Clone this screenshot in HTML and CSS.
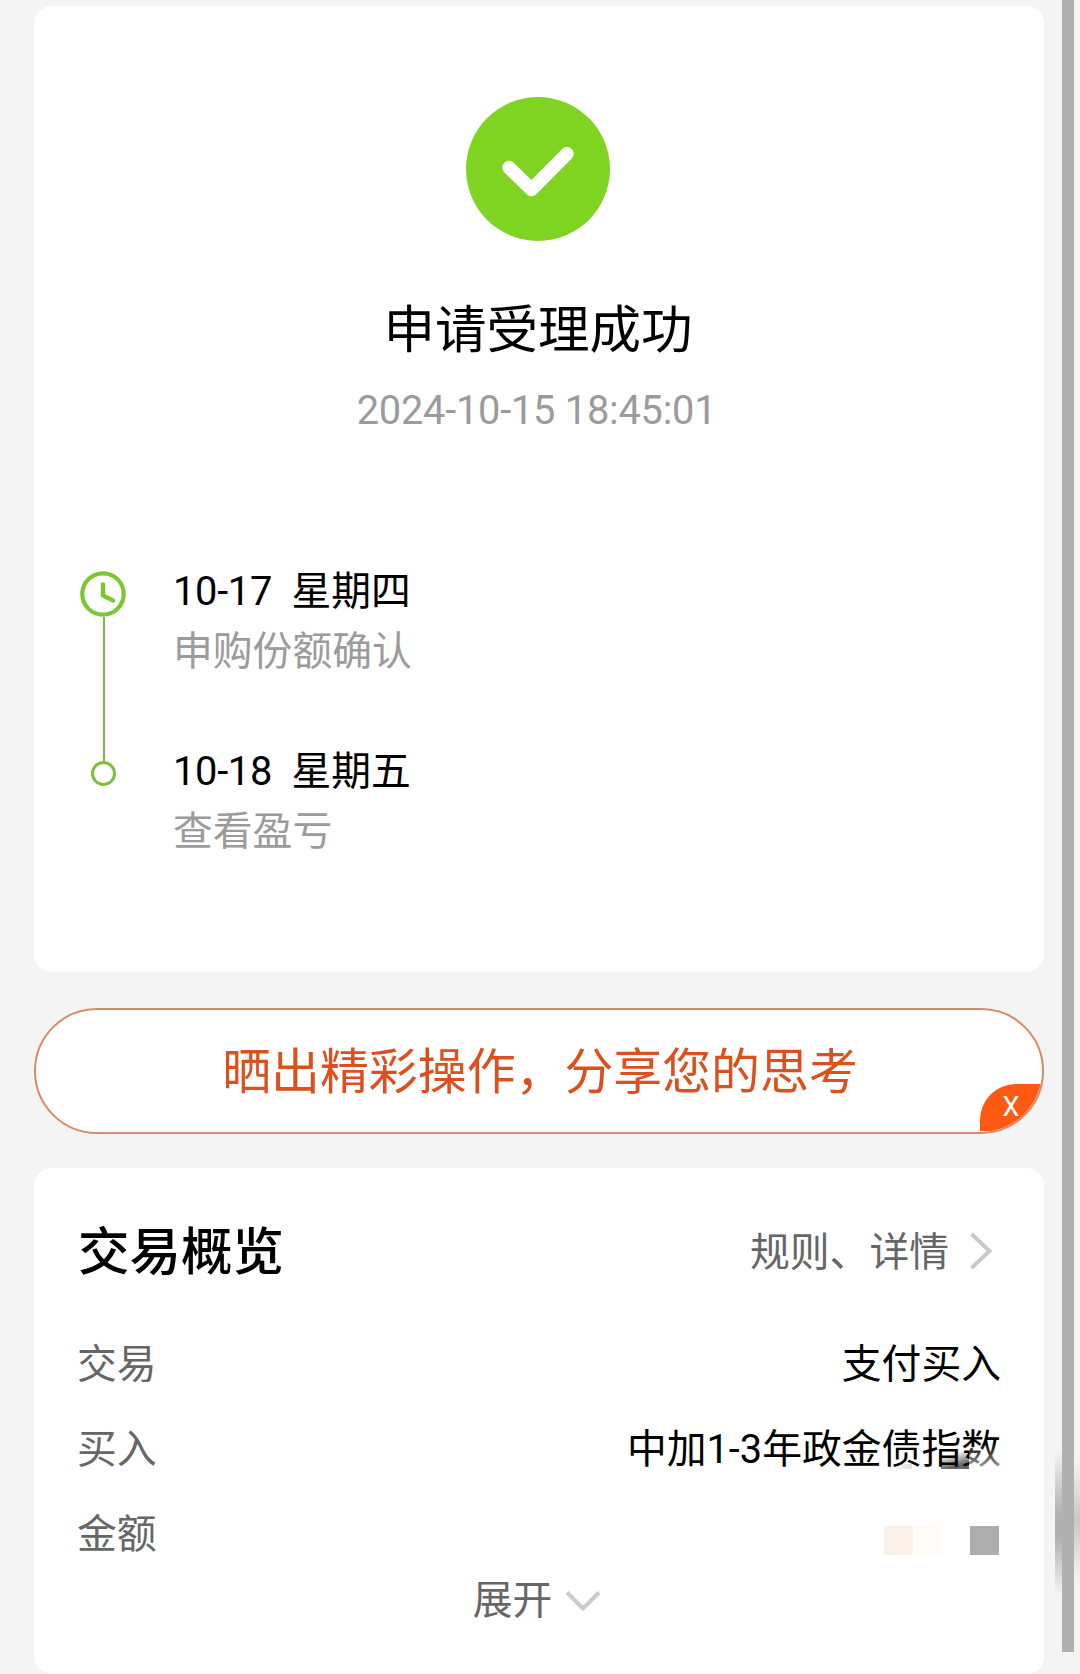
FILE: index.html
```html
<!DOCTYPE html>
<html lang="zh-CN">
<head>
<meta charset="utf-8">
<title>申请受理成功</title>
<link rel="stylesheet" href="styles.css">
</head>
<body>
<main class="page">
  <section class="card result">
    <svg class="result-icon" viewBox="0 0 144 144" aria-hidden="true">
      <circle cx="72" cy="72" r="72" fill="#7ed421"/>
      <path d="M43 70.5 L65.5 92.500 L101 56.700" fill="none" stroke="#fff" stroke-width="13.500" stroke-linecap="round" stroke-linejoin="round"/>
    </svg>
    <h1 class="result-title">申请受理成功</h1>
    <time class="result-time">2024-10-15 18:45:01</time>
    <ol class="timeline">
      <li class="step">
        <span class="step-mark">
          <svg class="clock" viewBox="0 0 46 46" aria-hidden="true">
            <circle cx="23" cy="23" r="20.700" fill="#fff" stroke="#7cc72f" stroke-width="4.200"/>
            <path d="M23 13.500 V24.500 L33 29.500" fill="none" stroke="#7cc72f" stroke-width="4.400" stroke-linecap="round" stroke-linejoin="round"/>
          </svg>
          <span class="step-line"></span>
        </span>
        <div class="step-text">
          <p class="step-date"><span class="day">10-17</span><span>星期四</span></p>
          <p class="step-note">申购份额确认</p>
        </div>
      </li>
      <li class="step">
        <span class="step-mark"><span class="dot"></span></span>
        <div class="step-text">
          <p class="step-date"><span class="day">10-18</span><span>星期五</span></p>
          <p class="step-note">查看盈亏</p>
        </div>
      </li>
    </ol>
  </section>

  <div class="share">
    <span class="share-text">晒出精彩操作，分享您的思考</span>
    <button class="share-close">X</button>
  </div>

  <section class="card overview">
    <header class="overview-head">
      <h2 class="overview-title">交易概览</h2>
      <a class="rules"><span class="rules-text">规则、详情</span>
        <svg class="arrow-right" viewBox="0 0 24 38" aria-hidden="true"><path d="M2.500 2 L20.500 19 L2.500 36" fill="none" stroke="#c8c8c8" stroke-width="3.800"/></svg>
      </a>
    </header>
    <dl class="rows">
      <div class="row"><dt>交易</dt><dd>支付买入</dd></div>
      <div class="row"><dt>买入</dt><dd class="fund">中加1-3年政金债指数<span class="smear smear-small"></span><span class="smear smear-dark"></span><span class="fade"></span></dd></div>
      <div class="row"><dt>金额</dt><dd class="mosaic"><i class="tile tile-peach"></i><i class="tile tile-cream"></i><i class="tile"></i><i class="tile tile-gray"></i></dd></div>
    </dl>
    <button class="expand">展开
      <svg class="arrow-down" viewBox="0 0 36 22" aria-hidden="true"><path d="M2 2.500 L18 18.500 L34 2.500" fill="none" stroke="#cbcbcb" stroke-width="4"/></svg>
    </button>
  </section>
</main>
<div class="edge-shadow"></div>
<div class="edge-shadow-right"></div>
<div class="scrollbar"></div>
</body>
</html>
```

FILE: styles.css
```css
* { box-sizing: border-box; margin: 0; padding: 0; }
body {
  position: relative;
  width: 1080px;
  height: 1674px;
  overflow: hidden;
  background: #f4f4f4;
  color: #000;
  font-family: Roboto, "Noto Sans CJK SC", sans-serif;
  font-size: 39.8px;
}
button { border: 0; background: none; font: inherit; }
svg { display: block; flex: none; }
.page {
  display: flex;
  flex-direction: column;
  height: 1674px;
  padding: 6px 36px 0 34px;
}
.card { background: #fff; border-radius: 18px; }

.result {
  display: flex;
  flex-direction: column;
  align-items: center;
  height: 966px;
  padding-top: 91px;
}
.result-icon { width: 144px; height: 144px; margin-right: 2px; }
.result-title {
  margin: 55px 2px 0 0;
  font-size: 51.5px;
  font-weight: 400;
  line-height: 70px;
}
.result-time {
  margin: 21px 5px 0 0;
  color: #9b9b9b;
  font-size: 39.8px;
  letter-spacing: -0.25px;
  line-height: 48px;
}
.timeline {
  align-self: stretch;
  margin-top: 127px;
  padding-left: 46px;
  list-style: none;
}
.step { display: flex; height: 180px; gap: 47px; }
.step-mark {
  display: flex;
  flex-direction: column;
  align-items: center;
  width: 46px;
  padding-top: 9px;
}
.clock { width: 46px; height: 46px; }
.step-line { flex: none; width: 2px; height: 145px; margin-left: 1px; background: #7cb84a; }
.dot {
  width: 25px;
  height: 25px;
  margin-top: 10px;
  border: 3px solid #7cc03c;
  border-radius: 50%;
}
.step-text { line-height: 60px; }
.step-date { display: flex; }
.day { width: 118.500px; letter-spacing: -0.3px; }
.step-note { color: #9b9b9b; }

.share {
  position: relative;
  display: flex;
  justify-content: center;
  flex: none;
  height: 126px;
  margin-top: 36px;
  overflow: hidden;
  border: 2px solid #d68b66;
  border-radius: 63px;
  background: #fff;
}
.share-text {
  padding-left: 2px;
  color: #dc501e;
  font-size: 48.900px;
  line-height: 125px;
}
.share-close {
  position: absolute;
  right: 0;
  bottom: 1px;
  width: 62px;
  height: 47px;
  border-radius: 36px 0 0 0;
  background: #fc5a12;
  color: #fff;
  font-size: 27px;
  line-height: 47px;
}

.overview {
  height: 506px;
  margin-top: 34px;
  padding: 45px 43px 0 44px;
}
.overview-head {
  display: flex;
  justify-content: space-between;
  height: 80px;
  line-height: 80px;
}
.overview-title { font-size: 51.500px; font-weight: 500; }
.rules {
  display: flex;
  align-items: center;
  gap: 20px;
  padding-right: 8px;
  color: #666;
}
.arrow-right { width: 24px; height: 38px; margin-top: -4px; }
.rows { margin-top: 30px; }
.row { display: flex; justify-content: space-between; height: 85px; line-height: 84px; }
dt { margin-left: -1px; color: #666; }
.fund { position: relative; }
.smear { position: absolute; }
.smear-small {
  right: 89px;
  bottom: 24px;
  width: 20px;
  height: 5px;
  background: linear-gradient(90deg, #fff0, #0002);
}
.smear-dark {
  right: 32px;
  bottom: 24px;
  width: 28px;
  height: 18px;
  background: linear-gradient(165deg, #0000 20%, #0009 75%, #0009);
}
.fade {
  position: absolute;
  right: 0;
  bottom: 24px;
  width: 32px;
  height: 26px;
  background: linear-gradient(#fff0, #fffa);
}
.mosaic { display: flex; padding: 33px 2px 0 0; }
.tile { width: 28.700px; height: 29px; }
.tile-peach { background: #fbf1eb; }
.tile-cream { background: #fffcf8; }
.tile-gray { background: #adadad; }
.expand {
  display: flex;
  align-items: center;
  gap: 13px;
  margin: -7px auto 0;
  padding-right: 5px;
  color: #666;
  line-height: 60px;
}
.arrow-down { width: 36px; height: 22px; }

.scrollbar {
  position: absolute;
  top: 0;
  left: 1062px;
  width: 12px;
  height: 1652px;
  background: #b0b0b0;
}
.edge-shadow {
  position: absolute;
  top: 1450px;
  left: 1055px;
  width: 7px;
  height: 145px;
  background: linear-gradient(#b0b0b000, #b0b0b0 45%, #b0b0b0 60%, #b0b0b000);
}
.edge-shadow-right {
  position: absolute;
  top: 1460px;
  left: 1074px;
  width: 6px;
  height: 120px;
  background: linear-gradient(#c8c8c800, #c8c8c8 50%, #c8c8c800);
}
```
